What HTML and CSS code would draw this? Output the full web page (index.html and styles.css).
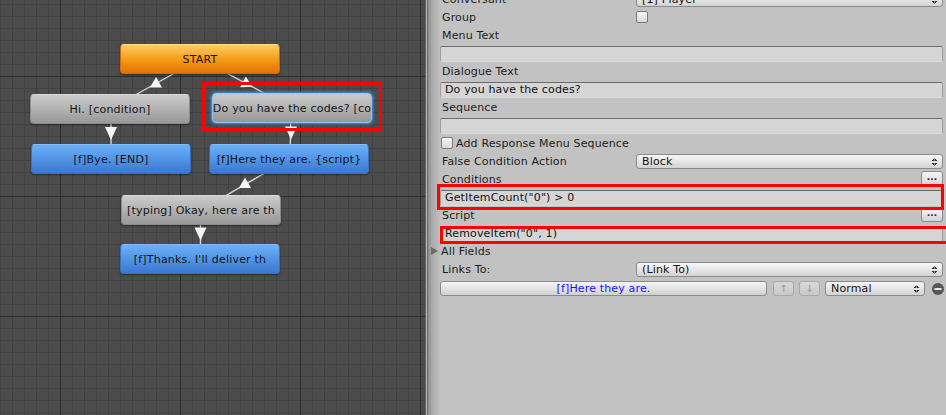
FILE: index.html
```html
<!DOCTYPE html>
<html lang="en">
<head>
<meta charset="utf-8">
<title>Dialogue Editor</title>
<link rel="stylesheet" href="styles.css">
</head>
<body>
<div class="app">
  <div class="canvas">
    <svg class="links" width="425" height="415" viewBox="0 0 425 415">
      <g class="link-line">
        <line x1="200" y1="59" x2="110" y2="109"/>
        <line x1="200" y1="59" x2="292" y2="108"/>
        <line x1="111" y1="109" x2="111" y2="159"/>
        <line x1="291" y1="108" x2="290" y2="159"/>
        <line x1="289" y1="159" x2="201" y2="210"/>
        <line x1="200.5" y1="210" x2="200.5" y2="259"/>
      </g>
      <g class="link-head">
        <polygon points="149.9,87.4 156.1,77 162,87.6"/>
        <polygon points="240.1,87.2 245.8,76.5 252.2,86.8"/>
        <polygon points="105,127 117,127 111,140"/>
        <polygon points="285,126.5 297,126.5 291,139.5"/>
        <polygon points="238.9,188 245,177.5 251.1,188"/>
        <polygon points="194.5,227.5 206.5,227.5 200.5,240.5"/>
      </g>
    </svg>
    <div class="node node-start" style="left:120px;top:44px">START</div>
    <div class="node node-npc" style="left:30px;top:94px">Hi. [condition]</div>
    <div class="node node-npc node-selected" style="left:212px;top:93px">Do you have the codes? [co</div>
    <div class="node node-pc" style="left:31px;top:144px">[f]Bye. [END]</div>
    <div class="node node-pc" style="left:209px;top:144px">[f]Here they are. {script}</div>
    <div class="node node-npc" style="left:121px;top:195px">[typing] Okay, here are th</div>
    <div class="node node-pc" style="left:120px;top:244px">[f]Thanks. I'll deliver th</div>
    <div class="mark mark-node"></div>
  </div>
  <div class="divider"></div>
  <div class="inspector">
    <div class="row row-first"><span class="label">Conversant</span><div class="popup">[1] Player<span class="popup-arrows"></span></div></div>
    <div class="row"><span class="label">Group</span><span class="checkbox"></span></div>
    <div class="row"><span class="label">Menu Text</span></div>
    <div class="row"><div class="field"></div></div>
    <div class="row"><span class="label">Dialogue Text</span></div>
    <div class="row"><div class="field">Do you have the codes?</div></div>
    <div class="row"><span class="label">Sequence</span></div>
    <div class="row"><div class="field"></div></div>
    <div class="row"><span class="checkbox checkbox-lead"></span><span class="label label-inline">Add Response Menu Sequence</span></div>
    <div class="row"><span class="label">False Condition Action</span><div class="popup">Block<span class="popup-arrows"></span></div></div>
    <div class="row"><span class="label">Conditions</span><span class="mini-btn">...</span></div>
    <div class="row"><div class="field">GetItemCount("0") &gt; 0</div></div>
    <div class="row"><span class="label">Script</span><span class="mini-btn">...</span></div>
    <div class="row"><div class="field">RemoveItem("0", 1)</div></div>
    <div class="row"><span class="foldout"></span><span class="label">All Fields</span></div>
    <div class="row"><span class="label">Links To:</span><div class="popup">(Link To)<span class="popup-arrows"></span></div></div>
    <div class="row row-link">
      <div class="link-btn">[f]Here they are.</div>
      <div class="arrow-btn">&#8593;</div>
      <div class="arrow-btn">&#8595;</div>
      <div class="popup popup-small">Normal<span class="popup-arrows"></span></div>
      <svg class="minus" width="12" height="12" viewBox="0 0 12 12"><circle cx="6" cy="6" r="6" fill="#575757"/><rect x="2.5" y="5" width="7" height="2" fill="#e6e6e6"/></svg>
    </div>
    <div class="mark mark-cond"></div>
    <div class="mark mark-script"></div>
  </div>
</div>
</body>
</html>
```
FILE: styles.css
```css
* { box-sizing: border-box; }
html, body { margin: 0; padding: 0; }
body {
  width: 946px;
  height: 415px;
  overflow: hidden;
  background: #c2c2c2;
  font-family: "DejaVu Sans", "Liberation Sans", sans-serif;
  font-size: 11px;
  color: #1c1c1c;
}
.app { display: flex; width: 946px; height: 415px; }

/* ---------- canvas ---------- */
.canvas {
  position: relative;
  flex: none;
  width: 425px;
  height: 415px;
  overflow: hidden;
  background-color: #4c4c4c;
  background-image:
    linear-gradient(to right, #2c2c2c 1px, transparent 1px),
    linear-gradient(to bottom, #2c2c2c 1px, transparent 1px),
    linear-gradient(to right, #424242 1px, transparent 1px),
    linear-gradient(to bottom, #424242 1px, transparent 1px);
  background-size: 120px 120px, 120px 120px, 12px 12px, 12px 12px;
  background-position: 60px 0, 0 76px, 0 0, 0 4px;
}
.links { position: absolute; left: 0; top: 0; }
.link-line line { stroke: #d8d8d8; stroke-width: 1.4; }
.link-head polygon { fill: #f4f4f4; }

.node {
  position: absolute;
  width: 160px;
  height: 30px;
  border-radius: 4px;
  display: flex;
  align-items: center;
  justify-content: center;
  white-space: nowrap;
  overflow: hidden;
  letter-spacing: .2px;
  color: #141414;
  box-shadow: 0 1px 2px rgba(0,0,0,.45);
}
.node-start {
  background: linear-gradient(to bottom, #ffcc66 0%, #f7a21e 45%, #e67100 100%);
  border: 1px solid #c96a10;
  border-top-color: #ffd98c;
}
.node-npc {
  background: linear-gradient(to bottom, #cbcbcb 0%, #b2b2b2 50%, #989898 100%);
  border: 1px solid #8a8a8a;
  border-top-color: #d8d8d8;
}
.node-pc {
  background: linear-gradient(to bottom, #6bb0f7 0%, #5294e6 50%, #3d77d1 100%);
  border: 1px solid #3a6fc0;
  border-top-color: #7fbcf9;
}
.node-selected {
  border: 1px solid #8cc4f8;
  box-shadow: 0 0 2px 1px #3f8fe0, 0 0 5px rgba(70,150,235,.6);
}

.mark {
  position: absolute;
  border: 3px solid #ff0000;
  pointer-events: none;
}
.mark-node { left: 202px; top: 82px; width: 180px; height: 49px; }

/* ---------- divider ---------- */
.divider {
  flex: none;
  width: 3px;
  background: linear-gradient(to right, #5e5e5e 0 1px, #bdbdbd 1px 2px, #6c6c6c 2px 3px);
}

/* ---------- inspector ---------- */
.inspector {
  position: relative;
  flex: 1;
  overflow: hidden;
  padding: 0 3px 0 12px;
  background: linear-gradient(to right, #8c8c8c 0, #aaaaaa 4px, #c2c2c2 13px);
  letter-spacing: .15px;
}
.row {
  display: flex;
  align-items: center;
  height: 18px;
}
.row-first { margin-top: -10px; }
.label {
  flex: none;
  width: 196px;
  padding-left: 2px;
  white-space: nowrap;
}
.label-inline { width: auto; padding-left: 3px; }

.field {
  flex: 1;
  height: 16px;
  margin-top: 1px;
  padding: 0 4px;
  line-height: 14px;
  background: #d5d5d5;
  border: 1px solid #9c9c9c;
  border-top-color: #6a6a6a;
  border-bottom-color: #dadada;
  border-radius: 2px;
  color: #111;
  white-space: nowrap;
  overflow: hidden;
}

.checkbox {
  flex: none;
  width: 12px;
  height: 12px;
  border: 1px solid #7a7a7a;
  border-radius: 2px;
  background: linear-gradient(to bottom, #f6f6f6, #dadada);
}
.checkbox-lead { margin-left: 1px; }

.popup {
  position: relative;
  flex: 1;
  height: 15px;
  margin-top: 1px;
  padding: 0 16px 0 5px;
  line-height: 13px;
  border: 1px solid #8a8a8a;
  border-radius: 3px;
  background: linear-gradient(to bottom, #f6f6f6 0%, #e6e6e6 50%, #d2d2d2 100%);
  color: #111;
  white-space: nowrap;
  overflow: hidden;
}
.row-first .popup { margin-top: 0; }
.popup-arrows {
  position: absolute;
  right: 5px;
  top: 3px;
  width: 5px;
  height: 8px;
  background:
    linear-gradient(to bottom right, transparent 50%, #333 50%) 0 0 / 2.5px 3px no-repeat,
    linear-gradient(to bottom left, transparent 50%, #333 50%) 2.5px 0 / 2.5px 3px no-repeat,
    linear-gradient(to top right, transparent 50%, #333 50%) 0 5px / 2.5px 3px no-repeat,
    linear-gradient(to top left, transparent 50%, #333 50%) 2.5px 5px / 2.5px 3px no-repeat;
}

.mini-btn {
  margin-left: auto;
  width: 22px;
  height: 15px;
  margin-top: -2px;
  border: 1px solid #8a8a8a;
  border-radius: 3px;
  background: linear-gradient(to bottom, #f6f6f6, #d4d4d4);
  font-size: 9px;
  font-weight: bold;
  line-height: 10px;
  text-align: center;
  letter-spacing: 0;
  color: #222;
}

.foldout {
  flex: none;
  width: 0;
  height: 0;
  margin-left: -9px;
  margin-right: 1px;
  border-top: 4px solid transparent;
  border-bottom: 4px solid transparent;
  border-left: 7px solid #6a6a6a;
}

.row-link { margin-top: 3px; height: 15px; gap: 6px; }
.link-btn {
  flex: none;
  width: 327px;
  height: 15px;
  border: 1px solid #8a8a8a;
  border-radius: 3px;
  background: linear-gradient(to bottom, #f6f6f6 0%, #e4e4e4 50%, #d0d0d0 100%);
  color: #1414ff;
  text-align: center;
  line-height: 13px;
}
.arrow-btn {
  flex: none;
  width: 21px;
  height: 15px;
  border: 1px solid #a9a9a9;
  border-radius: 3px;
  background: linear-gradient(to bottom, #d8d8d8, #c8c8c8);
  color: #9a9a9a;
  text-align: center;
  line-height: 14px;
  font-size: 10px;
}
.arrow-btn + .arrow-btn { margin-left: -1px; }
.popup-small { flex: none; width: 100px; margin-top: 0; margin-left: -1px; }
.minus { flex: none; margin-left: 1px; }

.mark-cond { left: 9px; top: 184px; width: 507px; height: 26px; }
.mark-script { left: 12px; top: 226px; width: 530px; height: 18px; }
```
